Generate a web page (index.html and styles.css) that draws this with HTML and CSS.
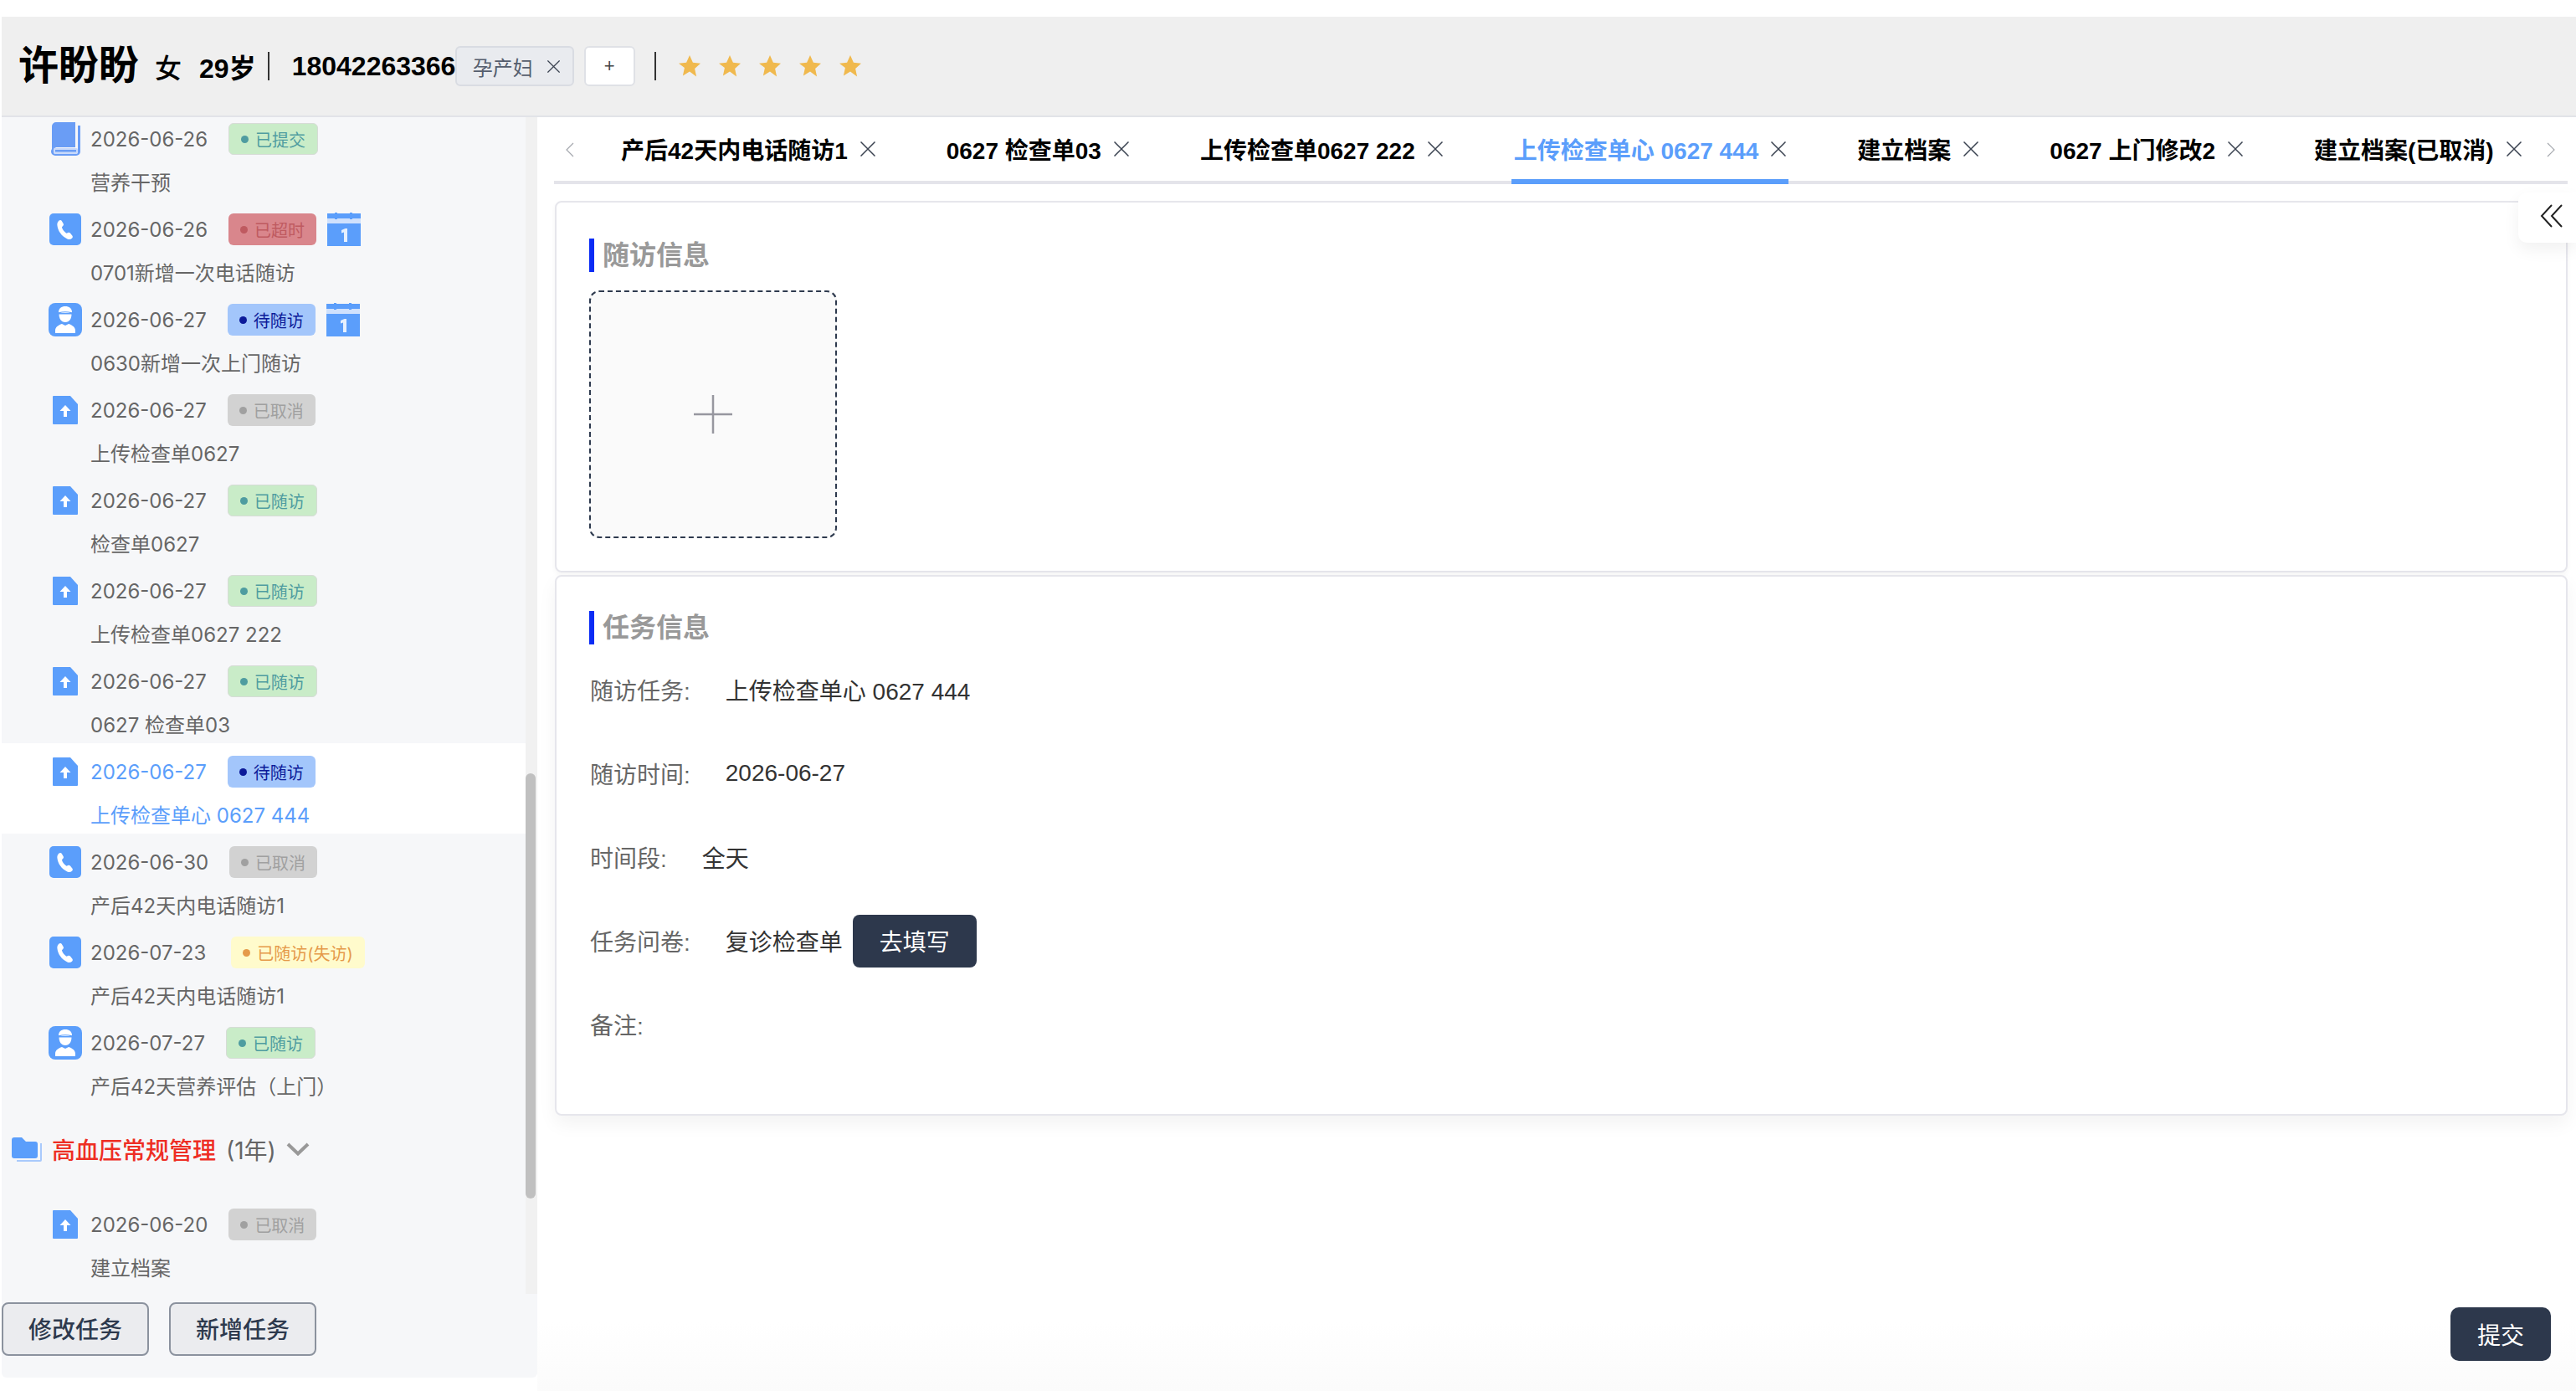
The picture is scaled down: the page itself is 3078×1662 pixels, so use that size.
FILE: index.html
```html
<!DOCTYPE html>
<html lang="zh-CN">
<head>
<meta charset="utf-8">
<title>随访</title>
<link rel="stylesheet" href="styles.css">
</head>
<body>
<svg class="defs" width="0" height="0">
  <symbol id="i-book" viewBox="0 0 36 40">
    <path d="M2 34V5a5 5 0 0 1 5-5h23v30H7a5 5 0 0 0-5 4z" fill="#6a9df5"/>
    <path d="M33 4h3v31a5 5 0 0 1-5 5H6a5 5 0 0 1-5-5 5 5 0 0 1 5-5h1a4 4 0 0 0-3 5 3 3 0 0 0 3 3h23a3 3 0 0 0 3-3z" fill="#6a9df5"/>
    <rect x="4" y="31" width="29" height="7" rx="2" fill="#c9dafb"/>
    <rect x="6" y="33" width="25" height="2.5" fill="#6a9df5"/>
  </symbol>
  <symbol id="i-phone" viewBox="0 0 38 38">
    <rect width="38" height="38" rx="5" fill="#5b9efb"/>
    <path d="M11.5 8.5c1.2-.9 2.6-.8 3.3.4l1.9 3.4c.5 1 .3 2-.5 2.7l-1.3 1.2c.6 2.8 3 6 5.6 7.5l1.7-.8c1-.4 2-.2 2.7.7l2.4 3c.8 1 .7 2.3-.3 3.1-1.6 1.3-3.6 1.6-5.6.7-6.8-3-11.3-9.4-12-16.3-.2-2.4.5-4.2 2.1-5.6z" fill="#fff"/>
  </symbol>
  <symbol id="i-person" viewBox="0 0 40 40">
    <rect width="40" height="40" rx="8" fill="#5b9efb"/>
    <path d="M12 11c0-4.500 3.500-7 8-7s8 2.500 8 7v1H12z" fill="#fff"/>
    <path d="M12.500 13.500h15c0 5-2.500 9.500-7.500 9.500s-7.500-4.500-7.500-9.500z" fill="#fff"/>
    <path d="M8 36v-3c0-4 3.500-6.500 8-8l4 2 4-2c4.500 1.500 8 4 8 8v3z" fill="#fff"/>
    <path d="M12 11.800c5-1.300 11-1.300 16 0" fill="none" stroke="#5b9efb" stroke-width="1.200"/>
  </symbol>
  <symbol id="i-upload" viewBox="0 0 30 34">
    <path d="M1 0h20l9 10v23a1 1 0 0 1-1 1H1a1 1 0 0 1-1-1V1a1 1 0 0 1 1-1z" fill="#5b9efb"/>
    <path d="M15 11l6.500 7H17v7h-4v-7H8.500z" fill="#fff"/>
  </symbol>
  <symbol id="i-cal" viewBox="0 0 40 40">
    <rect y="1" width="40" height="39" fill="#5b9efb"/>
    <rect y="7" width="40" height="6" fill="#cfe1fd"/>
    <rect x="9" y="0" width="3" height="8" fill="#5b9efb"/>
    <rect x="27" y="0" width="3" height="8" fill="#5b9efb"/>
    <path d="M17 21l4.500-2H24v16h-4V23.500l-3 1z" fill="#e6f0fe"/>
  </symbol>
  <symbol id="i-folder" viewBox="0 0 36 29">
    <path d="M0 3a3 3 0 0 1 3-3h9l5 5h11a3 3 0 0 1 3 3v14a3 3 0 0 1-3 3H3a3 3 0 0 1-3-3z" fill="#5b9efb"/>
    <path d="M34 7h2v20a2 2 0 0 1-2 2H6v-2h28z" fill="#a9cafc"/>
  </symbol>
  <symbol id="i-x" viewBox="0 0 18 18">
    <path d="M.5 .5l17 17M17.500 .5l-17 17" fill="none" stroke="#3a4250" stroke-width="1.500"/>
  </symbol>
  <symbol id="i-star" viewBox="0 0 28 28">
    <path d="M14 1l3.900 8.800 9.100.9-6.900 6.300 2 9.400L14 20.500 5.900 25.400l2-9.400L1 10.700l9.100-.9z" fill="#f0b94e"/>
  </symbol>
</svg>

<div class="app">
  <header class="head">
    <span class="name">许盼盼</span>
    <span class="sex">女</span>
    <span class="age">29岁</span>
    <span class="rule"></span>
    <span class="phone">18042263366</span>
    <span class="chip">孕产妇<svg class="chip-x"><use href="#i-x"/></svg></span>
    <span class="add">+</span>
    <span class="rule rule-b"></span>
    <span class="stars">
      <svg class="star"><use href="#i-star"/></svg>
      <svg class="star"><use href="#i-star"/></svg>
      <svg class="star"><use href="#i-star"/></svg>
      <svg class="star"><use href="#i-star"/></svg>
      <svg class="star"><use href="#i-star"/></svg>
    </span>
  </header>

  <div class="body">
    <aside class="side">
      <div class="list-wrap">
        <div class="list">
          <div class="row">
            <div class="line"><span class="ico"><svg class="s-book"><use href="#i-book"/></svg></span><span class="date">2026-06-26</span><span class="tag green">已提交</span></div>
            <div class="ttl">营养干预</div>
          </div>
          <div class="row">
            <div class="line"><span class="ico"><svg class="s-phone"><use href="#i-phone"/></svg></span><span class="date">2026-06-26</span><span class="tag red">已超时</span><svg class="s-cal"><use href="#i-cal"/></svg></div>
            <div class="ttl">0701新增一次电话随访</div>
          </div>
          <div class="row">
            <div class="line"><span class="ico"><svg class="s-person"><use href="#i-person"/></svg></span><span class="date">2026-06-27</span><span class="tag blue">待随访</span><svg class="s-cal"><use href="#i-cal"/></svg></div>
            <div class="ttl">0630新增一次上门随访</div>
          </div>
          <div class="row">
            <div class="line"><span class="ico"><svg class="s-upload"><use href="#i-upload"/></svg></span><span class="date">2026-06-27</span><span class="tag grey">已取消</span></div>
            <div class="ttl">上传检查单0627</div>
          </div>
          <div class="row">
            <div class="line"><span class="ico"><svg class="s-upload"><use href="#i-upload"/></svg></span><span class="date">2026-06-27</span><span class="tag green">已随访</span></div>
            <div class="ttl">检查单0627</div>
          </div>
          <div class="row">
            <div class="line"><span class="ico"><svg class="s-upload"><use href="#i-upload"/></svg></span><span class="date">2026-06-27</span><span class="tag green">已随访</span></div>
            <div class="ttl">上传检查单0627 222</div>
          </div>
          <div class="row">
            <div class="line"><span class="ico"><svg class="s-upload"><use href="#i-upload"/></svg></span><span class="date">2026-06-27</span><span class="tag green">已随访</span></div>
            <div class="ttl">0627 检查单03</div>
          </div>
          <div class="row active">
            <div class="line"><span class="ico"><svg class="s-upload"><use href="#i-upload"/></svg></span><span class="date">2026-06-27</span><span class="tag blue">待随访</span></div>
            <div class="ttl">上传检查单心 0627 444</div>
          </div>
          <div class="row">
            <div class="line"><span class="ico"><svg class="s-phone"><use href="#i-phone"/></svg></span><span class="date">2026-06-30</span><span class="tag grey">已取消</span></div>
            <div class="ttl">产后42天内电话随访1</div>
          </div>
          <div class="row">
            <div class="line"><span class="ico"><svg class="s-phone"><use href="#i-phone"/></svg></span><span class="date">2026-07-23</span><span class="tag yellow">已随访(失访)</span></div>
            <div class="ttl">产后42天内电话随访1</div>
          </div>
          <div class="row">
            <div class="line"><span class="ico"><svg class="s-person"><use href="#i-person"/></svg></span><span class="date">2026-07-27</span><span class="tag green">已随访</span></div>
            <div class="ttl">产后42天营养评估（上门）</div>
          </div>
          <div class="group">
            <svg class="s-folder"><use href="#i-folder"/></svg>
            <span class="g-name">高血压常规管理</span>
            <span class="g-year">(1年)</span>
            <svg class="s-chev" viewBox="0 0 28 16"><path d="M2 2L14 13.500 26 2" fill="none" stroke="#999" stroke-width="4"/></svg>
          </div>
          <div class="row">
            <div class="line"><span class="ico"><svg class="s-upload"><use href="#i-upload"/></svg></span><span class="date">2026-06-20</span><span class="tag grey">已取消</span></div>
            <div class="ttl">建立档案</div>
          </div>
        </div>
        <div class="track"><div class="thumb"></div></div>
      </div>
      <div class="side-btns">
        <button class="ghost">修改任务</button>
        <button class="ghost">新增任务</button>
      </div>
    </aside>

    <main class="main">
      <div class="tabs">
        <span class="arrow arrow-l"><svg class="s-arrow" viewBox="0 0 10 18"><path d="M9 1L1 9l8 8" fill="none" stroke="#a5a8ae" stroke-width="1.200"/></svg></span>
        <div class="tab">产后42天内电话随访1<svg class="tab-x"><use href="#i-x"/></svg></div>
        <div class="tab">0627 检查单03<svg class="tab-x"><use href="#i-x"/></svg></div>
        <div class="tab">上传检查单0627 222<svg class="tab-x"><use href="#i-x"/></svg></div>
        <div class="tab on">上传检查单心 0627 444<svg class="tab-x"><use href="#i-x"/></svg></div>
        <div class="tab">建立档案<svg class="tab-x"><use href="#i-x"/></svg></div>
        <div class="tab">0627 上门修改2<svg class="tab-x"><use href="#i-x"/></svg></div>
        <div class="tab">建立档案(已取消)<svg class="tab-x"><use href="#i-x"/></svg></div>
        <span class="arrow arrow-r"><svg class="s-arrow" viewBox="0 0 10 18"><path d="M1 1l8 8-8 8" fill="none" stroke="#a5a8ae" stroke-width="1.200"/></svg></span>
      </div>

      <button class="fold"><svg class="s-fold" viewBox="0 0 30 30"><path d="M15 2L3 15l12 13M27 2L15 15l12 13" fill="none" stroke="#222" stroke-width="2"/></svg></button>

      <section class="card card-a">
        <h2 class="sec">随访信息</h2>
        <div class="upload"><svg class="s-plus" viewBox="0 0 46 46"><path d="M0 23h46M23 0v46" fill="none" stroke="#97979f" stroke-width="2.500"/></svg></div>
      </section>

      <section class="card card-b">
        <h2 class="sec">任务信息</h2>
        <div class="info first"><span class="lab">随访任务:</span><span class="val">上传检查单心 0627 444</span></div>
        <div class="info"><span class="lab">随访时间:</span><span class="val">2026-06-27</span></div>
        <div class="info"><span class="lab">时间段:</span><span class="val">全天</span></div>
        <div class="info"><span class="lab">任务问卷:</span><span class="val">复诊检查单</span><button class="dark fill">去填写</button></div>
        <div class="info"><span class="lab">备注:</span></div>
      </section>

      <div class="foot"><button class="dark submit">提交</button></div>
    </main>
  </div>
</div>
</body>
</html>
```

FILE: styles.css
```css
* { box-sizing: border-box; }
html, body { margin: 0; padding: 0; }
body {
  width: 3078px;
  height: 1662px;
  overflow: hidden;
  background: #fff;
  font-family: "Liberation Sans", "Noto Sans CJK SC", sans-serif;
}
.defs { display: block; height: 0; }
svg { display: block; flex: none; }

.app { height: 1662px; padding: 20px 0 0 2px; display: flex; flex-direction: column; }

/* header */
.head {
  height: 120px;
  flex: none;
  display: flex;
  align-items: center;
  padding-left: 20px;
  background: #efefef;
  border-bottom: 2px solid #e2e3e8;
  color: #000;
  font-weight: 700;
  font-size: 32px;
}
.name { font-size: 48px; line-height: 60px; }
.sex { margin-left: 19px; font-weight: 500; }
.age { margin-left: 21px; }
.rule { width: 2px; height: 34px; background: #333; margin: 0 27px 0 14px; }
.phone { width: 195px; }
.chip {
  width: 142px;
  height: 48px;
  display: flex;
  align-items: center;
  padding-left: 19px;
  background: #e9ebef;
  border: 2px solid #d9dce2;
  border-radius: 6px;
  color: #555d6d;
  font-size: 24px;
  font-weight: 400;
}
.chip-x { width: 15px; height: 15px; margin-left: 17px; }
.add {
  width: 61px;
  height: 48px;
  margin-left: 12px;
  display: flex;
  align-items: center;
  justify-content: center;
  background: #fff;
  border: 2px solid #dfe1e6;
  border-radius: 6px;
  color: #444;
  font-size: 22px;
  font-weight: 400;
}
.rule-b { margin: 0 26px 0 23px; }
.stars { display: flex; gap: 20px; }
.star { width: 28px; height: 28px; }

/* layout */
.body { flex: 1; display: flex; align-items: flex-start; min-height: 0; }

/* sidebar */
.side {
  width: 640px;
  height: 1506px;
  flex: none;
  display: flex;
  flex-direction: column;
  background: #f6f7f9;
  border-radius: 0 0 6px 6px;
  font-family: Inter, "Noto Sans CJK SC", sans-serif;
}
.list-wrap { height: 1406px; flex: none; display: flex; overflow: hidden; }
.list { flex: 1; min-width: 0; overflow: hidden; }
.row { height: 108px; padding: 15px 0 0 56px; color: #666; }
.row:first-child { margin-top: -8px; }
.row.active { background: #fff; color: #5b9efb; }
.line { height: 38px; display: flex; align-items: center; }
.ico { width: 40px; height: 40px; margin-right: 10px; flex: none; display: flex; align-items: center; justify-content: center; }
.date { font-size: 24px; line-height: 36px; padding-top: 2px; }
.ttl { margin: 14px 0 0 50px; padding-top: 2px; font-size: 24px; line-height: 36px; white-space: nowrap; }

.s-book { width: 36px; height: 40px; }
.s-phone { width: 38px; height: 38px; }
.s-person { width: 40px; height: 40px; }
.s-upload { width: 30px; height: 34px; }
.s-cal { width: 40px; height: 40px; margin-left: 13px; }

.tag {
  height: 38px;
  margin-left: 25px;
  padding: 0 14px;
  display: flex;
  align-items: center;
  border-radius: 6px;
  font-size: 20px;
  white-space: nowrap;
}
.tag::before {
  content: "";
  width: 9px;
  height: 9px;
  margin-right: 8px;
  border-radius: 50%;
  background: currentColor;
}
.green { background: #c9ecc8; color: #4f9ca0; border: 1px solid #d6dcd6; }
.red { background: #d9868c; color: #bf5a60; }
.blue { background: #a3c6fb; color: #0c1a99; }
.grey { background: #d2d2d2; color: #a0a0a0; }
.yellow { background: #fffbcc; color: #e59a4a; margin-left: 30px; }

.group { height: 109px; display: flex; align-items: center; padding: 0 0 3px 12px; font-size: 28px; }
.s-folder { width: 36px; height: 29px; }
.g-name { margin-left: 12px; color: #ee2e24; font-weight: 500; }
.g-year { margin-left: 12px; color: #666; }
.s-chev { width: 28px; height: 16px; margin-left: 12px; }

.track { width: 14px; flex: none; background: #f1f1f1; }
.thumb { width: 12px; height: 508px; margin-top: 784px; background: #c0c0c0; border-radius: 6px; }

.side-btns { display: flex; gap: 24px; padding-top: 10px; }
.ghost {
  width: 176px;
  height: 64px;
  padding: 0 0 2px;
  background: #ebecef;
  border: 2px solid #8b929e;
  border-radius: 8px;
  color: #2e3a4e;
  font: 500 28px "Liberation Sans", "Noto Sans CJK SC", sans-serif;
}

/* main */
.main {
  flex: 1;
  min-width: 0;
  height: 1522px;
  position: relative;
  display: flex;
  flex-direction: column;
  background: linear-gradient(#fff 1440px, #fbfbfb);
}
.tabs {
  height: 80px;
  flex: none;
  margin: 0 10px 0 20px;
  display: flex;
  align-items: stretch;
  box-shadow: inset 0 -4px 0 #e4e4ea;
}
.arrow { display: flex; align-items: center; flex: none; padding-bottom: 2px; }
.arrow-l { width: 77px; padding-left: 14px; }
.arrow-r { margin-left: 27px; }
.s-arrow { width: 10px; height: 18px; }
.tab {
  height: 80px;
  padding: 2px 3px 0;
  display: flex;
  align-items: center;
  border-bottom: 6px solid transparent;
  color: #000;
  font-size: 28px;
  font-weight: 700;
  white-space: nowrap;
}
.tab + .tab { margin-left: 79px; }
.tab.on { color: #5b9efb; border-bottom-color: #5b9efb; }
.tab-x { width: 18px; height: 18px; margin-left: 15px; }

.fold {
  position: absolute;
  top: 90px;
  right: 0;
  width: 69px;
  height: 60px;
  padding: 0 0 4px 25px;
  display: flex;
  align-items: center;
  background: #fff;
  border: 0;
  border-radius: 10px 0 0 10px;
  box-shadow: 0 8px 20px rgba(0, 0, 0, 0.06);
}
.s-fold { width: 30px; height: 30px; }

.card {
  flex: none;
  margin: 0 10px 0 21px;
  padding: 43px 39px 0;
  background: #fff;
  border: 2px solid #e6e6ec;
  border-radius: 8px;
}
.card-a { height: 444px; margin-top: 20px; box-shadow: 0 3px 6px rgba(0, 0, 0, 0.04); }
.card-b { height: 646px; margin-top: 3px; padding-top: 41px; box-shadow: 0 10px 22px rgba(0, 0, 0, 0.05); }
.sec {
  height: 40px;
  margin: 0;
  padding-left: 10px;
  border-left: 6px solid #0a2cf5;
  color: #999;
  font-size: 32px;
  font-weight: 700;
  line-height: 40px;
}
.upload {
  width: 296px;
  height: 296px;
  margin: 22px 0 0 0;
  display: flex;
  align-items: center;
  justify-content: center;
  background: #fafafa;
  border: 2px dashed #2e3a4e;
  border-radius: 12px;
}
.s-plus { width: 46px; height: 46px; }

.info { height: 100px; display: flex; align-items: center; font-size: 28px; padding-left: 1px; }
.info.first { margin-top: 4px; }
.lab { color: #666; margin-right: 42px; }
.val { color: #333; }
.dark {
  background: #2d384c;
  border: 0;
  border-radius: 8px;
  color: #fff;
  font: 28px "Liberation Sans", "Noto Sans CJK SC", sans-serif;
  padding: 0;
}
.fill { width: 148px; height: 63px; margin-left: 12px; }
.foot { margin-top: auto; padding: 0 30px 36px 0; display: flex; justify-content: flex-end; }
.submit { width: 120px; height: 64px; border-radius: 10px; }
```
